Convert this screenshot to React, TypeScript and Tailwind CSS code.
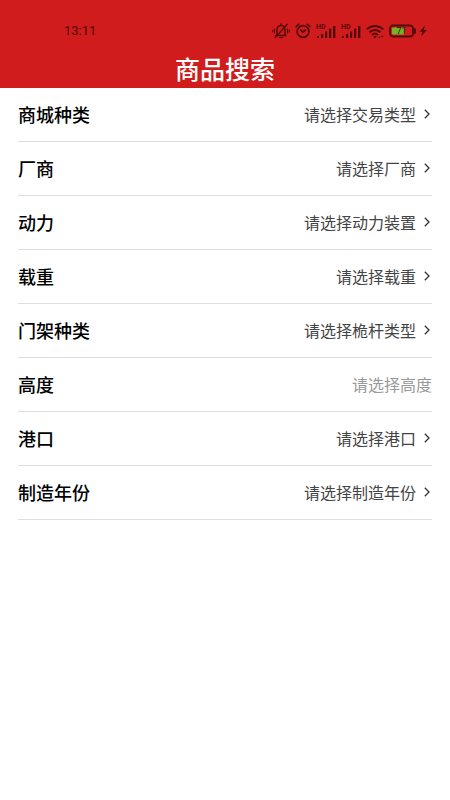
type Field = {
  id: string;
  label: string;
  placeholder: string;
  type: 'select' | 'input';
};

const fields: Field[] = [
  { id: 'category', label: '商城种类', placeholder: '请选择交易类型', type: 'select' },
  { id: 'maker', label: '厂商', placeholder: '请选择厂商', type: 'select' },
  { id: 'power', label: '动力', placeholder: '请选择动力装置', type: 'select' },
  { id: 'load', label: '载重', placeholder: '请选择载重', type: 'select' },
  { id: 'mast', label: '门架种类', placeholder: '请选择桅杆类型', type: 'select' },
  { id: 'height', label: '高度', placeholder: '请选择高度', type: 'input' },
  { id: 'port', label: '港口', placeholder: '请选择港口', type: 'select' },
  { id: 'year', label: '制造年份', placeholder: '请选择制造年份', type: 'select' },
];

function MutedBell() {
  return (
    <svg width="18" height="18" viewBox="0 0 18 18" fill="none" stroke="currentColor" strokeWidth="1.4" strokeLinecap="round" strokeLinejoin="round">
      <path d="M5 12.5V8c0-2.6 1.6-4.4 4-4.4s4 1.8 4 4.4v4.5l1 1H4z" />
      <path d="M9 2v1.4M7.6 15.6h2.8" />
      <path d="M15.2 2.2L3.2 15.6" />
      <path d="M2.6 7v4M.8 8v2M15.4 7v4M17.2 8v2" strokeWidth="1.1" />
    </svg>
  );
}

function Alarm() {
  return (
    <svg width="16" height="16" viewBox="0 0 16 16" fill="none" stroke="currentColor" strokeWidth="1.7" strokeLinecap="round" strokeLinejoin="round">
      <circle cx="8" cy="8.5" r="5.9" />
      <path d="M5.6 7L8 9.2 10.4 7" />
      <path d="M1.2 3.6l2.4-2.2M14.8 3.6l-2.4-2.2" />
    </svg>
  );
}

function Signal() {
  return (
    <span className="flex w-5 flex-col">
      <span className="h-1 text-[7px] leading-1 font-bold">HD</span>
      <svg className="-mt-1" width="20" height="13" viewBox="0 0 20 13" fill="currentColor">
        <rect x="1" y="11" width="2" height="2" />
        <rect x="5" y="9" width="2.2" height="4" />
        <rect x="9" y="6.5" width="2.2" height="6.5" />
        <rect x="13" y="3.5" width="2.2" height="9.5" />
        <rect x="17" y="1" width="2.4" height="12" />
      </svg>
    </span>
  );
}

function Wifi() {
  return (
    <svg width="18" height="15" viewBox="0 0 18 15" fill="none" stroke="currentColor" strokeWidth="1.9">
      <path d="M.8 5.4c4.6-4.5 11.8-4.5 16.4 0" />
      <path d="M3.5 8.3c3.1-3 7.9-3 11 0" />
      <path d="M6 11c1.7-1.6 4.3-1.6 6 0" />
      <path d="M9 14.4l-1.8-1.9c1-.9 2.6-.9 3.6 0z" fill="currentColor" stroke="none" />
      <path d="M12.6 13.4h1.6M15.4 12.4h1.8" strokeWidth="1.4" />
    </svg>
  );
}

function Battery() {
  return (
    <svg width="39" height="14" viewBox="0 0 39 14">
      <rect x="1" y="1.5" width="23" height="11" rx="3" fill="none" stroke="currentColor" strokeWidth="1.8" />
      <rect x="3" y="3.5" width="12.5" height="7" rx="1" fill="#74b324" />
      <path d="M26 5v4" stroke="currentColor" strokeWidth="1.8" strokeLinecap="round" />
      <text x="12.5" y="10" textAnchor="middle" fontSize="9" fill="#3a0808">
        71
      </text>
      <path d="M36 1.5l-5.5 6.3h3L32 12.5l5.8-6.6h-3z" fill="currentColor" />
    </svg>
  );
}

function Chevron() {
  return (
    <svg className="pointer-events-none mr-0.5 shrink-0 text-[#333]" width="6" height="10" viewBox="0 0 6 10" fill="none" stroke="currentColor" strokeWidth="1.3">
      <path d="M.8.8L5 5 .8 9.2" />
    </svg>
  );
}

function StatusBar() {
  return (
    <div className="flex h-12 items-center justify-between pt-3.5 pr-5.5 pl-16 text-[#540a0a]">
      <span className="font-['Roboto',sans-serif] text-[13px]">13:11</span>
      <div className="flex items-center gap-[5px] font-['Roboto',sans-serif]">
        <MutedBell />
        <Alarm />
        <Signal />
        <Signal />
        <Wifi />
        <Battery />
      </div>
    </div>
  );
}

function FieldRow({ field }: { field: Field }) {
  return (
    <div className="flex h-[54px] items-center justify-between border-b border-[#dedede] pb-0.5">
      <label htmlFor={field.id} className="shrink-0 text-lg font-medium text-black">
        {field.label}
      </label>
      {field.type === 'select' ? (
        <div className="flex items-center gap-2">
          <select id={field.id} className="cursor-pointer appearance-none bg-transparent text-right text-[#444]">
            <option>{field.placeholder}</option>
          </select>
          <Chevron />
        </div>
      ) : (
        <input
          id={field.id}
          type="text"
          placeholder={field.placeholder}
          className="min-w-0 flex-1 bg-transparent text-right outline-none placeholder:text-[#999]"
        />
      )}
    </div>
  );
}

export default function App() {
  return (
    <div className="min-h-screen bg-white font-['Noto_Sans_CJK_SC',sans-serif]" lang="zh-CN">
      <header className="bg-[#d01c1c]">
        <StatusBar />
        <h1 className="h-10 text-center text-[25px] leading-10 font-medium text-white">商品搜索</h1>
      </header>
      <form className="px-[18px]">
        {fields.map((field) => (
          <FieldRow key={field.id} field={field} />
        ))}
      </form>
    </div>
  );
}
